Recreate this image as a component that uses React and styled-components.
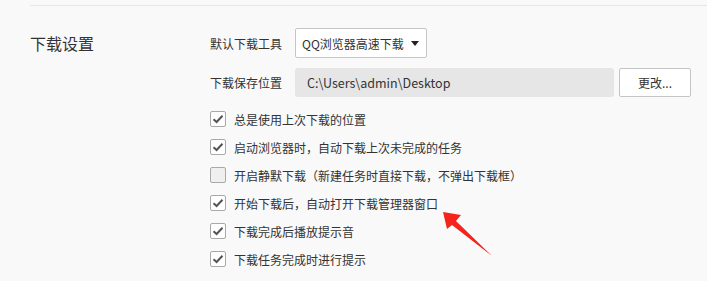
import React from "react";
import styled, { createGlobalStyle } from "styled-components";

const Global = createGlobalStyle`
  html, body { margin: 0; padding: 0; background: #f9f9f9; }
  body { font-family: "Noto Sans CJK SC", "Noto Sans", sans-serif; color: #333; }
`;

const Page = styled.div`
  width: 707px;
  height: 281px;
  overflow: hidden;
  padding: 5px 0 0 30px;
  box-sizing: border-box;
  position: relative;
`;

const Rule = styled.div`
  height: 1px;
  background: #e6e6e6;
`;

const Section = styled.div`
  display: grid;
  grid-template-columns: 180px 1fr;
  margin-top: 22px;
`;

const Title = styled.div`
  font-size: 16px;
  line-height: 30px;
  color: #333;
`;

const Body = styled.div`
  display: flex;
  flex-direction: column;
`;

const FieldRow = styled.div`
  display: flex;
  align-items: center;
  height: 30px;
  margin-top: ${(p) => p.$gap || 0}px;
`;

const Label = styled.div`
  width: 85px;
  font-size: 12px;
  color: #333;
`;

const Select = styled.div`
  width: 132px;
  height: 30px;
  box-sizing: border-box;
  border: 1px solid #c6c6c6;
  border-radius: 2px;
  background: #fff;
  display: flex;
  align-items: center;
  justify-content: space-between;
  padding: 0 7px 0 6px;
  font-size: 12px;
  color: #333;
`;

const Caret = styled.span`
  width: 0;
  height: 0;
  border-left: 4px solid transparent;
  border-right: 4px solid transparent;
  border-top: 5px solid #222;
`;

const PathField = styled.div`
  width: 319px;
  height: 29px;
  box-sizing: border-box;
  background: #e6e6e6;
  border-radius: 3px;
  display: flex;
  align-items: center;
  padding-left: 12px;
  font-size: 12.5px;
  color: #333;
`;

const Button = styled.div`
  margin-left: 5px;
  width: 72px;
  height: 29px;
  box-sizing: border-box;
  border: 1px solid #c4c4c4;
  border-radius: 2px;
  background: #fff;
  display: flex;
  align-items: center;
  justify-content: center;
  font-size: 12px;
  color: #333;
`;

const Options = styled.div`
  display: flex;
  flex-direction: column;
  margin-top: 8px;
`;

const Option = styled.label`
  display: flex;
  align-items: center;
  height: 28px;
  font-size: 12px;
  color: #333;
`;

const Box = styled.span`
  width: 16px;
  height: 16px;
  box-sizing: border-box;
  border: 1px solid #a9a9a9;
  border-radius: 2px;
  background: ${(p) => (p.$checked ? "#fff" : "#efefef")};
  display: flex;
  align-items: center;
  justify-content: center;
  margin-right: 8px;
  flex-shrink: 0;
`;

const Arrow = styled.svg`
  position: absolute;
  left: 0;
  top: 0;
  pointer-events: none;
`;

const options = [
  ["总是使用上次下载的位置", true],
  ["启动浏览器时，自动下载上次未完成的任务", true],
  ["开启静默下载（新建任务时直接下载，不弹出下载框）", false],
  ["开始下载后，自动打开下载管理器窗口", true],
  ["下载完成后播放提示音", true],
  ["下载任务完成时进行提示", true],
];

function Check() {
  return (
    <svg width="12" height="10" viewBox="0 0 12 10">
      <path d="M1.5 5.2 L4.6 8 L10.5 1.8" fill="none" stroke="#555" strokeWidth="2" />
    </svg>
  );
}

export default function App() {
  return (
    <Page>
      <Global />
      <Rule />
      <Section>
        <Title>下载设置</Title>
        <Body>
          <FieldRow>
            <Label>默认下载工具</Label>
            <Select>
              <span>QQ浏览器高速下载</span>
              <Caret />
            </Select>
          </FieldRow>
          <FieldRow $gap={9}>
            <Label>下载保存位置</Label>
            <PathField>C:\Users\admin\Desktop</PathField>
            <Button>更改...</Button>
          </FieldRow>
          <Options>
            {options.map(([text, checked]) => (
              <Option key={text}>
                <Box $checked={checked}>{checked && <Check />}</Box>
                {text}
              </Option>
            ))}
          </Options>
        </Body>
      </Section>
      <Arrow width="707" height="281" viewBox="0 0 707 281">
        <polygon
          points="443,212 461,215 456,221 492,256 452,225 447,229"
          fill="#f5231c"
        />
      </Arrow>
    </Page>
  );
}
